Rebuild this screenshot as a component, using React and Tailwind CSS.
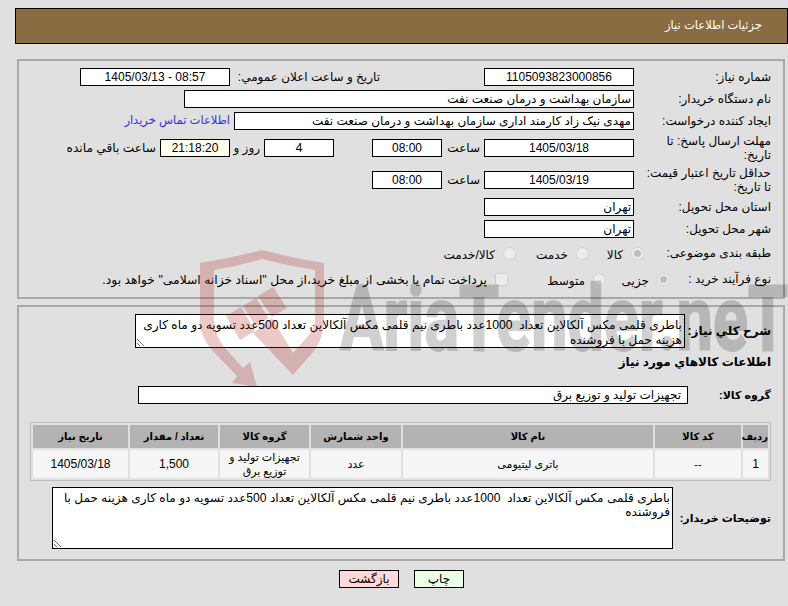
const fa = "font-['Liberation_Sans','DejaVu_Sans',sans-serif]";
const desc = "باطری قلمی مکس آلکالاین تعداد  1000عدد باطری نیم قلمی مکس آلکالاین تعداد 500عدد تسویه دو ماه کاری هزینه حمل با فروشنده";

function Field({ value, className = "", center = true, dir }) {
  return (
    <input
      readOnly
      value={value}
      dir={dir}
      className={`h-[18px] shrink-0 border border-black bg-white px-[2px] text-[12px] leading-[16px] text-black outline-none ${center ? "text-center" : "text-right"} ${className}`}
    />
  );
}

function Label({ children, className = "w-[137px]" }) {
  return <div className={`shrink-0 whitespace-nowrap text-[12px] leading-[14px] text-black ${className}`}>{children}</div>;
}

function Radio({ on }) {
  return (
    <span className="flex h-[13px] w-[13px] shrink-0 items-center justify-center rounded-full border border-[#d4d4d4] bg-[#ececec]">
      {on && <span className="h-[7px] w-[7px] rounded-full bg-[#bdbdbd]" />}
    </span>
  );
}

function Choice({ on, children, className }) {
  return (
    <div className={`flex shrink-0 items-center gap-[8px] ${className}`}>
      <Radio on={on} />
      <span className="mt-[4px] text-[12px] leading-[14px]">{children}</span>
    </div>
  );
}

function Panel({ children, className }) {
  return (
    <div className={`mr-[3px] w-[768px] border-2 border-[#a8a8a8] px-[12px] ${className}`}>{children}</div>
  );
}

function Th({ children, className = "" }) {
  return <th className={`h-[23px] bg-[#b3b3b3] p-0 text-center align-middle text-[10px] font-bold ${className}`}>{children}</th>;
}
function Td({ children, className = "" }) {
  return <td className={`h-[28px] bg-[#f5f5f5] p-0 text-center align-middle text-[11px] leading-[14px] ${className}`}>{children}</td>;
}

function Watermark() {
  return (
    <svg viewBox="0 0 788 606" className="pointer-events-none absolute left-0 top-0 z-10 h-[606px] w-[788px] [direction:ltr]">
      <g fill="#b01e1e" fillOpacity="0.24">
        <path fillRule="evenodd" d="M200 263 Q232 258 262 250 Q292 258 324 263 L324 322 Q323 340 313 352 L293 375 L253 333 L272 318 L293 353 L309 335 Q315 328 315 318 L315 270 Q288 266 262 259 Q238 266 214 270 L214 322 Q215 335 224 347 L243 368 L250 362 L257 387 L232 383 L237 376 L212 350 Q201 338 200 322 Z" />
        <path d="M226 316 L241 307 L255 331 L240 340 Z" />
        <path d="M243 306 L256 298 L268 318 L256 327 Z" />
        <path d="M258 296 L273 287 L287 308 L272 317 Z" />
      </g>
      <text x="340" y="350" textLength="448" lengthAdjust="spacingAndGlyphs" textAnchor="start" className="[direction:ltr]" fontFamily="Roboto, 'DejaVu Sans', sans-serif" fontWeight="700" fontSize="90" fill="#000" stroke="#000" strokeWidth="2" opacity="0.18">AriaTender.neT</text>
    </svg>
  );
}

export default function App() {
  return (
    <div dir="rtl" className={`relative h-[606px] w-[788px] overflow-hidden bg-[#e0e0e0] pt-[8px] text-black ${fa}`}>
      <div dir="ltr" className="ml-[15px] flex h-[36px] w-[773px] items-center justify-end border border-black bg-[#8b6c42] pr-[25px]">
        <span dir="rtl" className="text-[11.5px] text-white">جزئیات اطلاعات نیاز</span>
      </div>

      <Panel className="mt-[15px] h-[240px] pt-[7px]">
        <div className="flex h-[18px] items-center">
          <Label>شماره نیاز:</Label>
          <Field value="1105093823000856" className="w-[150px]" />
          <Label className="mr-[104px] w-[150px]">تاریخ و ساعت اعلان عمومي:</Label>
          <Field value="1405/03/13 - 08:57" dir="ltr" className="w-[150px]" />
        </div>
        <div className="mt-[4px] flex h-[18px] items-center">
          <Label>نام دستگاه خریدار:</Label>
          <Field value="سازمان بهداشت و درمان صنعت نفت" center={false} className="w-[450px]" />
        </div>
        <div className="mt-[4px] flex h-[18px] items-center">
          <Label>ایجاد کننده درخواست:</Label>
          <Field value="مهدی نیک زاد کارمند اداری سازمان بهداشت و درمان صنعت نفت" center={false} className="w-[400px]" />
          <a className="mr-[4px] text-[11.5px] text-[#3333dd]">اطلاعات تماس خریدار</a>
        </div>
        <div className="mt-[9px] flex h-[18px] items-center">
          <Label>مهلت ارسال پاسخ: تا<br />تاریخ:</Label>
          <Field value="1405/03/18" className="w-[150px]" />
          <span className="mr-[4px] w-[38px] shrink-0 text-[12px]">ساعت</span>
          <Field value="08:00" className="w-[70px]" />
          <div className="w-[38px] shrink-0" />
          <Field value="4" className="w-[70px]" />
          <span className="mr-[4px] w-[30px] shrink-0 whitespace-nowrap text-[12px]">روز و</span>
          <Field value="21:18:20" className="w-[70px] !bg-[#fffff0]" />
          <span className="mr-[4px] shrink-0 text-[12.2px]">ساعت باقي مانده</span>
        </div>
        <div className="mt-[14px] flex h-[18px] items-center">
          <Label>حداقل تاریخ اعتبار قیمت:<br />تا تاریخ:</Label>
          <Field value="1405/03/19" className="w-[150px]" />
          <span className="mr-[4px] w-[38px] shrink-0 text-[12px]">ساعت</span>
          <Field value="08:00" className="w-[70px]" />
        </div>
        <div className="mt-[9px] flex h-[18px] items-center">
          <Label>استان محل تحویل:</Label>
          <Field value="تهران" center={false} className="w-[150px]" />
        </div>
        <div className="mt-[4px] flex h-[18px] items-center">
          <Label>شهر محل تحویل:</Label>
          <Field value="تهران" center={false} className="w-[150px]" />
        </div>
        <div className="mt-[6px] flex h-[18px] items-center">
          <Label className="w-[127px]">طبقه بندی موضوعی:</Label>
          <Choice on className="w-[55px]">کالا</Choice>
          <Choice className="w-[73px]">خدمت</Choice>
          <Choice>کالا/خدمت</Choice>
        </div>
        <div className="mt-[8px] flex h-[18px] items-center">
          <Label className="w-[101px]">نوع فرآیند خرید :</Label>
          <Choice on className="w-[64px]">جزیی</Choice>
          <Choice className="w-[98px]">متوسط</Choice>
          <div className="flex items-center gap-[8px]">
            <span className="h-[13px] w-[13px] shrink-0 rounded-[2px] border border-[#cfcfcf] bg-[#ececec]" />
            <span className="mt-[3px] text-[12.35px]">پرداخت تمام یا بخشی از مبلغ خرید،از محل "اسناد خزانه اسلامی" خواهد بود.</span>
          </div>
        </div>
      </Panel>

      <Panel className="mt-[6px] h-[256px] pt-[7px]">
        <div className="flex items-center">
          <Label className="w-[86px] font-bold">شرح کلي نیاز:</Label>
          <textarea readOnly defaultValue={desc} className="block h-[34px] w-[550px] overflow-hidden border border-black bg-white px-[2px] pt-[3px] text-[12.1px] leading-[15px] text-black outline-none" />
        </div>
        <div className="mt-[7px] text-[12px] font-bold leading-[14px]">اطلاعات کالاهاي مورد نياز</div>
        <div className="mt-[17px] flex items-center">
          <Label className="w-[83px] !text-[11px] font-bold">گروه کالا:</Label>
          <Field value="تجهیزات تولید و توزیع برق" center={false} className="w-[550px] pr-[6px]" />
        </div>
        <table className="mt-[18px] w-[741px] table-fixed border-separate border-spacing-[2px] border border-[#bdbdbd]">
          <colgroup>
            <col className="w-[25px]" />
            <col className="w-[86px]" />
            <col className="w-[250px]" />
            <col className="w-[90px]" />
            <col className="w-[89px]" />
            <col className="w-[88px]" />
            <col />
          </colgroup>
          <thead>
            <tr>
              <Th>ردیف</Th>
              <Th>کد کالا</Th>
              <Th>نام کالا</Th>
              <Th>واحد شمارش</Th>
              <Th>گروه کالا</Th>
              <Th>تعداد / مقدار</Th>
              <Th>تاریخ نیاز</Th>
            </tr>
          </thead>
          <tbody>
            <tr>
              <Td className="text-[12px]">1</Td>
              <Td>--</Td>
              <Td>باتری لیتیومی</Td>
              <Td>عدد</Td>
              <Td>تجهیزات تولید و توزیع برق</Td>
              <Td className="text-[12px]">1,500</Td>
              <Td className="text-[12px]">1405/03/18</Td>
            </tr>
          </tbody>
        </table>
        <div className="mt-[6px] flex items-center">
          <Label className="w-[98px] !text-[11px] font-bold">توضیحات خریدار:</Label>
          <textarea readOnly defaultValue={desc} className="block h-[62px] w-[621px] overflow-hidden border border-black bg-white px-[2px] pt-[3px] text-[12.1px] leading-[14px] text-black outline-none" />
        </div>
      </Panel>

      <div dir="ltr" className="mt-[9px] ml-[339px] flex gap-[15px]">
        <button dir="rtl" className="h-[18px] w-[60px] border border-black bg-[#ffd9d9] text-[12px] leading-[16px]">بازگشت</button>
        <button dir="rtl" className="h-[18px] w-[50px] border border-black bg-[#eaffe5] text-[12px] leading-[16px]">چاپ</button>
      </div>

      <Watermark />
    </div>
  );
}
